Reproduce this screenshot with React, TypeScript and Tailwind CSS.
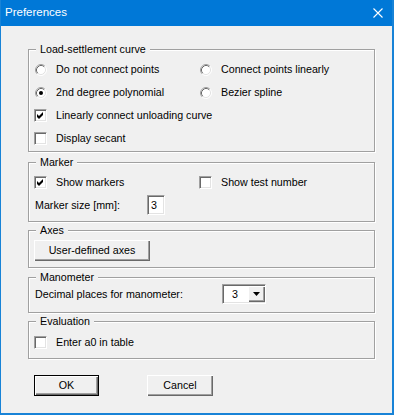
import type { ReactNode } from "react";
import clsx from "clsx";

const sunken =
  "border-t border-l border-t-[#a0a0a0] border-l-[#a0a0a0] border-r border-b border-r-white border-b-white shadow-[inset_1px_1px_0_#696969,inset_-1px_-1px_0_#e3e3e3] bg-white";

const raised =
  "shadow-[inset_1px_1px_0_#fff,inset_-1px_-1px_0_#696969,inset_-2px_-2px_0_#a0a0a0] bg-[#f0f0f0]";

function Radio({ label, checked }: { label: string; checked?: boolean }) {
  return (
    <div className="flex h-[23px] items-center pl-[1px]">
      <svg width="12" height="12" viewBox="0 0 12 12" className="flex-shrink-0">
        <circle cx="6" cy="6" r="5" fill="#fff" />
        <path d="M2.11 9.89 A5.5 5.5 0 0 1 9.89 2.11" fill="none" stroke="#a0a0a0" />
        <path d="M9.89 2.11 A5.5 5.5 0 0 1 2.11 9.89" fill="none" stroke="#fff" />
        <path d="M2.82 9.18 A4.5 4.5 0 0 1 9.18 2.82" fill="none" stroke="#696969" />
        <path d="M9.18 2.82 A4.5 4.5 0 0 1 2.82 9.18" fill="none" stroke="#e3e3e3" />
        {checked && <circle cx="6" cy="6" r="2" fill="#000" />}
      </svg>
      <span className="ml-[9px] whitespace-nowrap">{label}</span>
    </div>
  );
}

function Check({
  label,
  checked,
  className,
}: {
  label: string;
  checked?: boolean;
  className?: string;
}) {
  return (
    <div className={clsx("flex h-[23px] items-center", className)}>
      <div className={clsx("relative h-[13px] w-[13px] flex-shrink-0", sunken)}>
        {checked && (
          <svg
            width="7"
            height="7"
            viewBox="0 0 7 7"
            className="absolute left-[2px] top-[2px]"
          >
            <path d="M0 2 L2 4 L6 0 L6 3 L2 7 L0 5 Z" fill="#000" />
          </svg>
        )}
      </div>
      <span className="ml-[9px] whitespace-nowrap">{label}</span>
    </div>
  );
}

// Etched group box; the caption sits on the top edge
function Group({
  title,
  className,
  children,
}: {
  title: string;
  className?: string;
  children: ReactNode;
}) {
  return (
    <div
      className={clsx(
        "flex flex-col border border-[#a0a0a0] px-[5px] shadow-[1px_1px_0_#fff,inset_1px_1px_0_#fff]",
        className
      )}
    >
      <span className="-mt-[7px] ml-[2px] self-start bg-[#f0f0f0] px-[4px] leading-[13px]">
        {title}
      </span>
      {children}
    </div>
  );
}

function Button({
  children,
  isDefault,
  className,
}: {
  children: ReactNode;
  isDefault?: boolean;
  className?: string;
}) {
  return (
    <button
      className={clsx(
        "flex h-[21px] items-center justify-center",
        raised,
        isDefault && "border border-black",
        className
      )}
    >
      {children}
    </button>
  );
}

export default function App() {
  return (
    <div className="flex h-[415px] w-[394px] flex-col border-b-2 border-l border-r-2 border-[#1883d7] bg-[#f0f0f0] font-['Liberation_Sans',Arial,sans-serif] text-[10.7px] text-black">
      {/* Title bar */}
      <div className="flex h-[26px] flex-shrink-0 items-center justify-between bg-[#0078d7] pl-[4px] pr-[9px] text-[11.5px] text-white">
        <span>Preferences</span>
        <svg width="10" height="10" viewBox="0 0 10 10">
          <path d="M0.5 0.5 L9.5 9.5 M9.5 0.5 L0.5 9.5" stroke="#fff" strokeWidth="1.1" />
        </svg>
      </div>

      <div className="flex flex-col pl-[27px] pr-[17px] pt-[23px]">
        <Group title="Load-settlement curve">
          <div className="grid grid-cols-[165px_1fr] pb-[1px] pt-[2px]">
            <Radio label="Do not connect points" />
            <Radio label="Connect points linearly" />
            <Radio label="2nd degree polynomial" checked />
            <Radio label="Bezier spline" />
            <Check label="Linearly connect unloading curve" checked className="col-span-2" />
            <Check label="Display secant" className="col-span-2" />
          </div>
        </Group>

        <Group title="Marker" className="mt-[10px]">
          <div className="grid grid-cols-[165px_1fr] pt-[2px]">
            <Check label="Show markers" checked />
            <Check label="Show test number" />
          </div>
          <div className="mb-[6px] mt-[1px] flex h-[20px] items-center pl-[1px]">
            <span className="w-[112px]">Marker size [mm]:</span>
            <div className={clsx("flex h-[20px] w-[18px] items-center pl-[3px]", sunken)}>
              3
            </div>
          </div>
        </Group>

        <Group title="Axes" className="mt-[8px]">
          <div className="pb-[6px] pt-[3px]">
            <Button className="w-[116px]">User-defined axes</Button>
          </div>
        </Group>

        <Group title="Manometer" className="mt-[9px]">
          <div className="flex items-center pb-[8px] pl-[1px]">
            <span className="w-[187px]">Decimal places for manometer:</span>
            <div className={clsx("flex h-[20px] w-[44px] items-center", sunken)}>
              <span className="flex-1 pl-[9px]">3</span>
              <div className={clsx("flex h-[16px] w-[17px] items-center justify-center", raised)}>
                <svg width="7" height="4" viewBox="0 0 7 4">
                  <path d="M0 0 H7 L3.5 4 Z" fill="#000" />
                </svg>
              </div>
            </div>
          </div>
        </Group>

        <Group title="Evaluation" className="mt-[8px]">
          <div className="pb-[4px] pt-[3px]">
            <Check label="Enter a0 in table" />
          </div>
        </Group>

        <div className="mt-[16px] flex gap-[48px] pl-[6px]">
          <Button isDefault className="w-[65px]">OK</Button>
          <Button className="w-[66px]">Cancel</Button>
        </div>
      </div>
    </div>
  );
}
